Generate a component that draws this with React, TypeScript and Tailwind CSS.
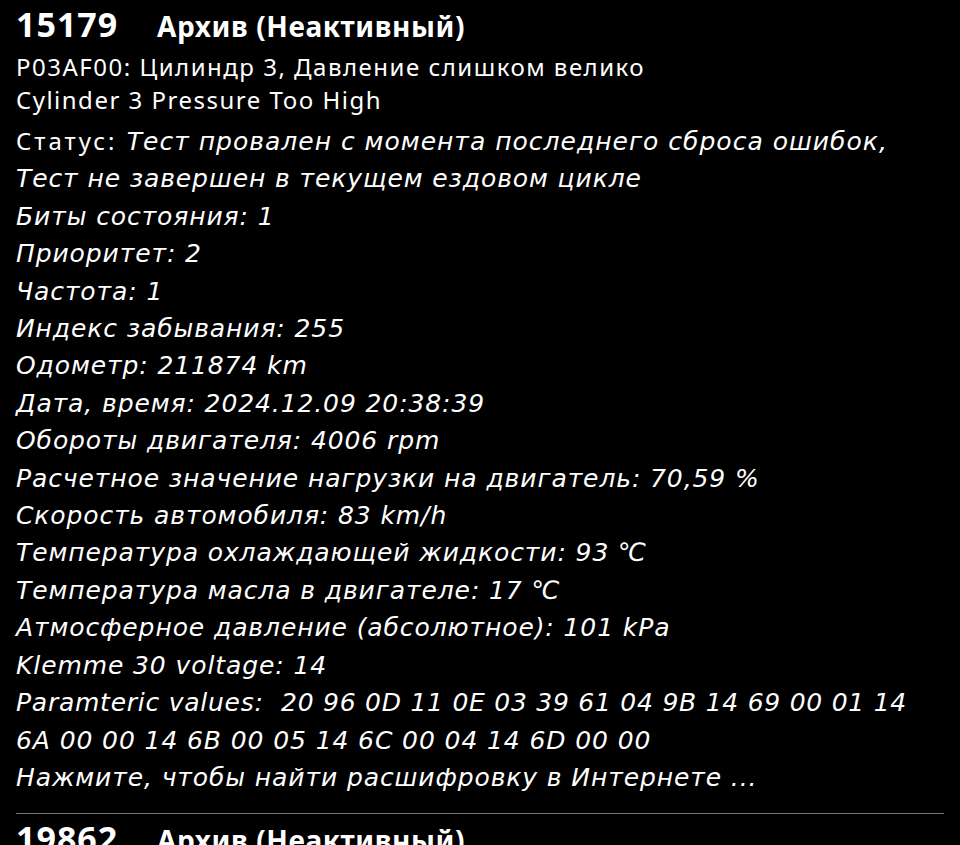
import React from "react";

const rows: { label: string; value: string }[] = [
  { label: "Биты состояния:", value: "1" },
  { label: "Приоритет:", value: "2" },
  { label: "Частота:", value: "1" },
  { label: "Индекс забывания:", value: "255" },
  { label: "Одометр:", value: "211874 km" },
  { label: "Дата, время:", value: "2024.12.09 20:38:39" },
  { label: "Обороты двигателя:", value: "4006 rpm" },
  { label: "Расчетное значение нагрузки на двигатель:", value: "70,59 %" },
  { label: "Скорость автомобиля:", value: "83 km/h" },
  { label: "Температура охлаждающей жидкости:", value: "93 ℃" },
  { label: "Температура масла в двигателе:", value: "17 ℃" },
  { label: "Атмосферное давление (абсолютное):", value: "101 kPa" },
  { label: "Klemme 30 voltage:", value: "14" },
];

const italicFont = { fontFamily: '"DejaVu Sans", sans-serif' };

export default function App() {
  return (
    <div
      className="w-[960px] h-[845px] overflow-hidden bg-black text-white pl-4 pr-4"
      style={{ fontFamily: '"Noto Sans", Roboto, sans-serif' }}
    >
      {/* ENTRY */}
      <div className="pt-1">
        <div className="flex items-baseline leading-[40px] font-bold">
          <span className="text-[34px] w-[141px] tracking-[1px]">15179</span>
          <span className="text-[28px] tracking-[0.6px]">Архив (Неактивный)</span>
        </div>

        <div className="mt-[4px] text-[24px] leading-[33px] tracking-[1.5px]">
          <div>P03AF00: Цилиндр 3, Давление слишком велико</div>
          <div>Cylinder 3 Pressure Too High</div>
        </div>

        <div className="mt-[6px] text-[25px] leading-[37.4px]">
          <div>
            <span className="text-[24px] tracking-[3px]">Статус: </span>
            <i className="tracking-[1px]" style={italicFont}>
              Тест провален с момента последнего сброса ошибок,
            </i>
          </div>
          <div className="italic tracking-[0.9px]" style={italicFont}>
            {[
              "Тест не завершен в текущем ездовом цикле",
              ...rows.map((r) => `${r.label} ${r.value}`),
            ].map((t) => (
              <div key={t}>{t}</div>
            ))}
            <div className="whitespace-pre tracking-[0.75px]">
              {"Paramteric values:  20 96 0D 11 0E 03 39 61 04 9B 14 69 00 01 14"}
            </div>
            <div>6A 00 00 14 6B 00 05 14 6C 00 04 14 6D 00 00</div>
            <div>Нажмите, чтобы найти расшифровку в Интернете ...</div>
          </div>
        </div>
      </div>

      {/* DIVIDER */}
      <div className="mt-[17px] h-px bg-[#777]" />

      {/* NEXT ENTRY (cut off) */}
      <div className="pt-1">
        <div className="flex items-baseline leading-[40px] font-bold">
          <span className="text-[34px] w-[141px] tracking-[1px]">19862</span>
          <span className="text-[28px] tracking-[0.6px]">Архив (Неактивный)</span>
        </div>
      </div>
    </div>
  );
}
